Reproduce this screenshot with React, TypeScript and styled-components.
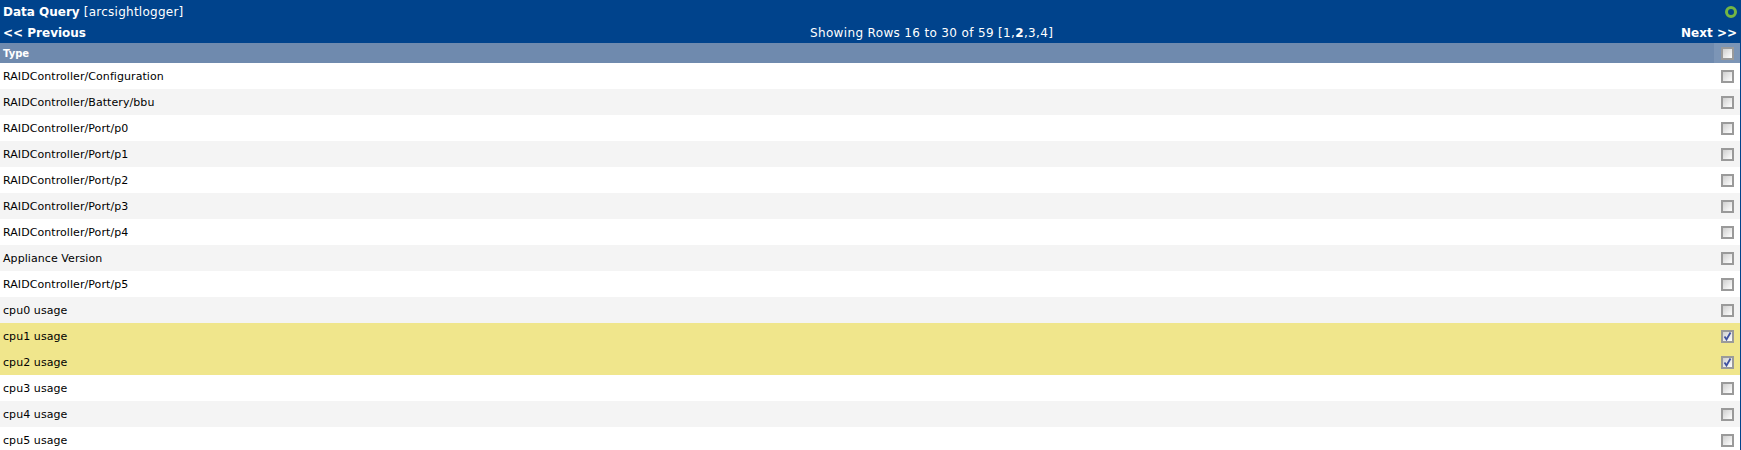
import React from "react";
import styled, { createGlobalStyle } from "styled-components";

const rows = [
  { name: "RAIDController/Configuration" },
  { name: "RAIDController/Battery/bbu" },
  { name: "RAIDController/Port/p0" },
  { name: "RAIDController/Port/p1" },
  { name: "RAIDController/Port/p2" },
  { name: "RAIDController/Port/p3" },
  { name: "RAIDController/Port/p4" },
  { name: "Appliance Version" },
  { name: "RAIDController/Port/p5" },
  { name: "cpu0 usage" },
  { name: "cpu1 usage", selected: true },
  { name: "cpu2 usage", selected: true },
  { name: "cpu3 usage" },
  { name: "cpu4 usage" },
  { name: "cpu5 usage" },
];

function CheckBox({ checked }: { checked?: boolean }) {
  return (
    <Box>
      {checked && (
        <svg width="9" height="9" viewBox="0 0 9 9">
          <path d="M1.5 4.5 L3.5 7.5 L7.5 0.5" fill="none" stroke="#3f51a0" strokeWidth="1.8" />
        </svg>
      )}
    </Box>
  );
}

export default function App() {
  return (
    <Page>
      <GlobalStyle />
      <TitleBar>
        <Title>
          <strong>Data Query</strong> [arcsightlogger]
        </Title>
        <Status />
      </TitleBar>
      <Pager>
        <PagerLink>&lt;&lt; Previous</PagerLink>
        <PagerInfo>
          Showing Rows 16 to 30 of 59 [1,<strong>2</strong>,3,4]
        </PagerInfo>
        <PagerNext>Next &gt;&gt;</PagerNext>
      </Pager>
      <HeadRow>
        <HeadLabel>Type</HeadLabel>
        <HeadCheck>
          <CheckBox />
        </HeadCheck>
      </HeadRow>
      {rows.map((row, i) => (
        <Row key={row.name} $odd={i % 2 === 1} $selected={row.selected}>
          <Cell>{row.name}</Cell>
          <CheckCell>
            <CheckBox checked={row.selected} />
          </CheckCell>
        </Row>
      ))}
    </Page>
  );
}

const GlobalStyle = createGlobalStyle`
  html, body {
    margin: 0;
    padding: 0;
    background: #fff;
    overflow: hidden;
  }
`;

const Page = styled.div`
  width: 1741px;
  height: 450px;
  box-sizing: border-box;
  overflow: hidden;
  border-right: 1px solid #00438c;
  font-family: "DejaVu Sans", Verdana, sans-serif;
`;

const TitleBar = styled.div`
  height: 22px;
  background: #00438c;
  color: #fff;
  display: flex;
  align-items: center;
  justify-content: space-between;
  padding: 2px 3px 0 3px;
  box-sizing: border-box;
`;

const Title = styled.div`
  font-size: 12px;
  letter-spacing: 0.25px;
  strong {
    font-weight: bold;
    letter-spacing: 0;
  }
`;

const Status = styled.span`
  width: 12px;
  height: 12px;
  box-sizing: border-box;
  border-radius: 50%;
  border: 3px solid #74b644;
`;

const Pager = styled.div`
  height: 21px;
  background: #00438c;
  color: #fff;
  display: grid;
  grid-template-columns: 807px auto 1fr;
  align-items: center;
  padding: 0 3px;
  font-size: 12px;
`;

const PagerLink = styled.div`
  font-weight: bold;
`;

const PagerNext = styled(PagerLink)`
  text-align: right;
`;

const PagerInfo = styled.div`
  letter-spacing: 0.35px;
  strong {
    font-weight: bold;
  }
`;

const HeadRow = styled.div`
  height: 20px;
  background: #6f8aae;
  display: flex;
  align-items: center;
  justify-content: space-between;
`;

const HeadLabel = styled.div`
  padding-left: 3px;
  font-size: 10px;
  font-weight: bold;
  color: #fff;
`;

const HeadCheck = styled.div`
  width: 26px;
  height: 100%;
  background: #7c95b6;
  display: flex;
  align-items: center;
  justify-content: center;
`;

const Row = styled.div<{ $odd?: boolean; $selected?: boolean }>`
  height: 26px;
  display: flex;
  align-items: center;
  justify-content: space-between;
  background: ${p => (p.$selected ? "#f0e68c" : p.$odd ? "#f4f4f4" : "#fff")};
`;

const Cell = styled.div`
  padding-left: 3px;
  font-size: 11px;
  letter-spacing: 0.07px;
  color: #000;
`;

const CheckCell = styled.div`
  width: 26px;
  display: flex;
  align-items: center;
  justify-content: center;
`;

const Box = styled.span`
  width: 13px;
  height: 13px;
  box-sizing: border-box;
  border: 2px solid #9a9a9a;
  background: linear-gradient(135deg, #cfcfcf, #ffffff);
  display: flex;
  align-items: center;
  justify-content: center;
`;
